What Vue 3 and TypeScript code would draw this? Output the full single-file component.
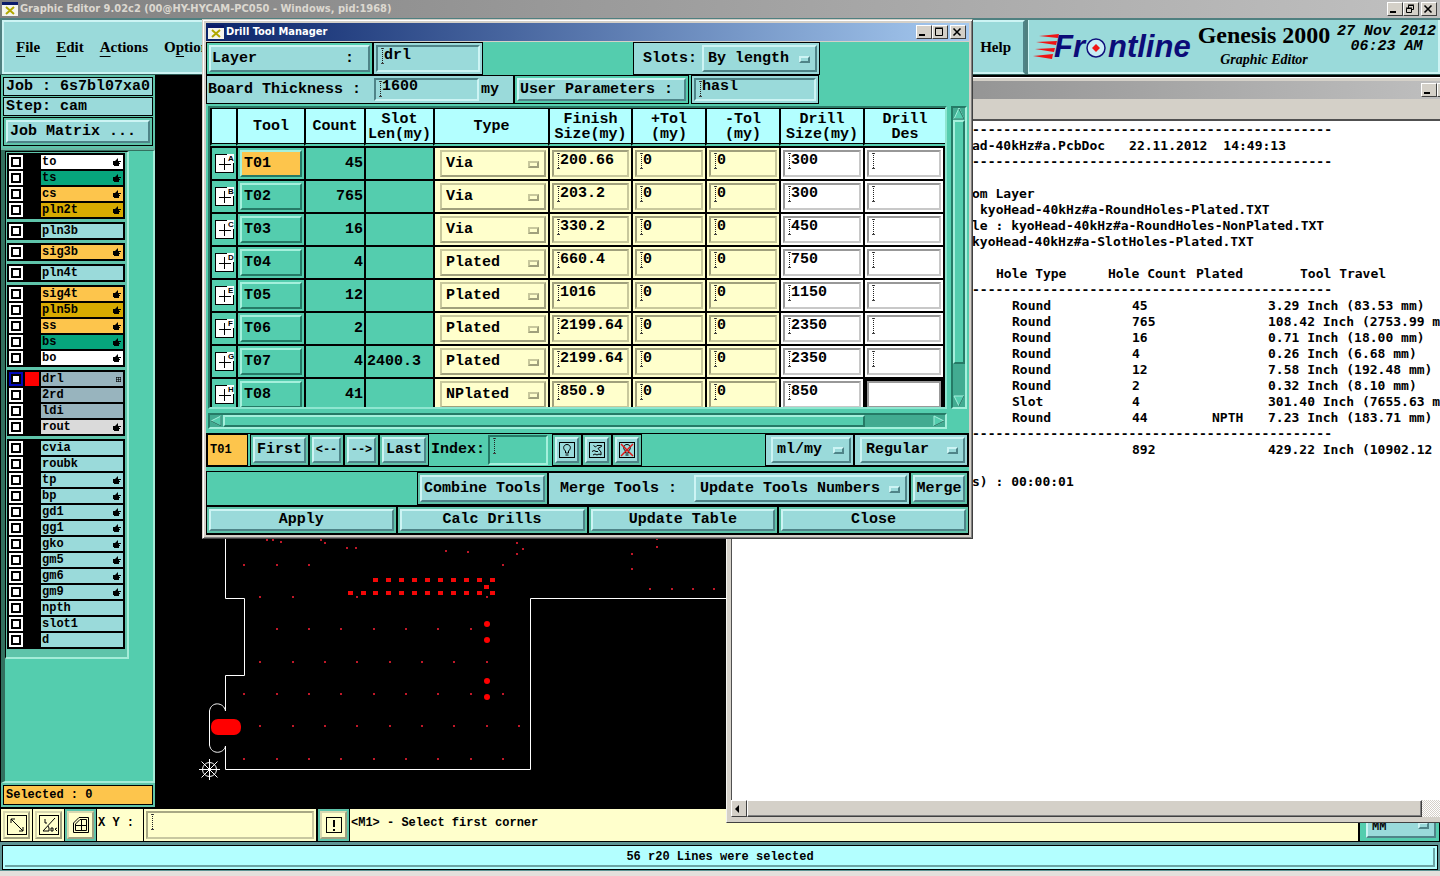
<script setup lang="ts">
import { ref } from 'vue'

interface Layer { name: string; tone: string; hand?: boolean; grid?: boolean; active?: boolean }
interface Tool { id: string; mark: string; count: number; slot: string; type: string; finish: string; drill: string }
interface Hole { type: string; count: string; plated: string; travel: string }

const layerGroups: Layer[][] = [
  [
    { name: 'to', tone: 'white', hand: true },
    { name: 'ts', tone: 'green', hand: true },
    { name: 'cs', tone: 'orange', hand: true },
    { name: 'pln2t', tone: 'gold', hand: true },
  ],
  [{ name: 'pln3b', tone: 'pale' }],
  [{ name: 'sig3b', tone: 'orange', hand: true }],
  [{ name: 'pln4t', tone: 'pale' }],
  [
    { name: 'sig4t', tone: 'orange', hand: true },
    { name: 'pln5b', tone: 'gold', hand: true },
    { name: 'ss', tone: 'orange', hand: true },
    { name: 'bs', tone: 'green', hand: true },
    { name: 'bo', tone: 'white', hand: true },
  ],
  [
    { name: 'drl', tone: 'slate', grid: true, active: true },
    { name: '2rd', tone: 'slate' },
    { name: 'ldi', tone: 'slate' },
    { name: 'rout', tone: 'gray', hand: true },
  ],
  [
    { name: 'cvia', tone: 'pale' },
    { name: 'roubk', tone: 'pale' },
    { name: 'tp', tone: 'pale', hand: true },
    { name: 'bp', tone: 'pale', hand: true },
    { name: 'gd1', tone: 'pale', hand: true },
    { name: 'gg1', tone: 'pale', hand: true },
    { name: 'gko', tone: 'pale', hand: true },
    { name: 'gm5', tone: 'pale', hand: true },
    { name: 'gm6', tone: 'pale', hand: true },
    { name: 'gm9', tone: 'pale', hand: true },
    { name: 'npth', tone: 'pale' },
    { name: 'slot1', tone: 'pale' },
    { name: 'd', tone: 'pale' },
  ],
]

const tools = ref<Tool[]>([
  { id: 'T01', mark: 'A', count: 45, slot: '', type: 'Via', finish: '200.66', drill: '300' },
  { id: 'T02', mark: 'B', count: 765, slot: '', type: 'Via', finish: '203.2', drill: '300' },
  { id: 'T03', mark: 'C', count: 16, slot: '', type: 'Via', finish: '330.2', drill: '450' },
  { id: 'T04', mark: 'D', count: 4, slot: '', type: 'Plated', finish: '660.4', drill: '750' },
  { id: 'T05', mark: 'E', count: 12, slot: '', type: 'Plated', finish: '1016', drill: '1150' },
  { id: 'T06', mark: 'F', count: 2, slot: '', type: 'Plated', finish: '2199.64', drill: '2350' },
  { id: 'T07', mark: 'G', count: 4, slot: '2400.3', type: 'Plated', finish: '2199.64', drill: '2350' },
  { id: 'T08', mark: 'H', count: 41, slot: '', type: 'NPlated', finish: '850.9', drill: '850' },
])
const selected = ref('T01')
const headings: string[][] = [
  [''], ['Tool'], ['Count'], ['Slot', 'Len(my)'], ['Type'], ['Finish', 'Size(my)'],
  ['+Tol', '(my)'], ['-Tol', '(my)'], ['Drill', 'Size(my)'], ['Drill', 'Des'],
]

const holes: Hole[] = [
  { type: 'Round', count: '45', plated: '', travel: '3.29 Inch (83.53 mm)' },
  { type: 'Round', count: '765', plated: '', travel: '108.42 Inch (2753.99 mm)' },
  { type: 'Round', count: '16', plated: '', travel: '0.71 Inch (18.00 mm)' },
  { type: 'Round', count: '4', plated: '', travel: '0.26 Inch (6.68 mm)' },
  { type: 'Round', count: '12', plated: '', travel: '7.58 Inch (192.48 mm)' },
  { type: 'Round', count: '2', plated: '', travel: '0.32 Inch (8.10 mm)' },
  { type: 'Slot', count: '4', plated: '', travel: '301.40 Inch (7655.63 mm)' },
  { type: 'Round', count: '44', plated: 'NPTH', travel: '7.23 Inch (183.71 mm)' },
]
const dashes = '-'.repeat(46)

const odd = [243, 276, 308, 340, 373, 405, 437, 470, 502]
const even = [259, 292, 324, 356, 389, 421, 453, 486]
const at = (xs: number[], y: number): number[][] => xs.map((x) => [x, y])
const vias: number[][] = [
  [266, 540], [272, 540], [280, 542], [320, 540], [324, 543], [346, 548], [355, 548],
  [445, 551], [467, 552], [516, 543], [522, 549], [516, 554], [656, 539], [656, 547],
  [631, 554], [631, 569], ...at([649, 671, 692, 713], 589),
  ...at([243, 276, 308, 502], 565), ...at([259, 292, 356, 486], 597),
  ...at(odd.slice(1, 8), 629), ...at(even, 662), ...at(odd, 694),
  ...at([...even, 518], 726), ...at(odd, 759),
]
const pinRow = [375, 388, 401, 414, 427, 440, 453, 466, 479, 492]
const pins: number[][] = [...at(pinRow, 580), ...at([350, 363, ...pinRow], 593), [486, 587]]
const pads: number[][] = [[487, 624], [487, 640], [487, 681], [487, 697]]
</script>

<template>
  <div class="screen">
    <div class="titlebar idle">
      <svg class="appicon" viewBox="0 0 16 16"><rect y="1" width="16" height="14" fill="#f4f4ec" /><rect y="1" width="16" height="3" fill="#0a1a6a" /><path d="M4 6l8 7M12 6l-8 7" stroke="#b0a800" stroke-width="2" /></svg>
      <span class="title">Graphic Editor 9.02c2 (00@HY-HYCAM-PC050 - Windows, pid:1968)</span>
      <button class="wb" aria-label="Minimize"><svg viewBox="0 0 12 10"><path d="M2 8h6" stroke="#000" stroke-width="2" /></svg></button>
      <button class="wb" aria-label="Restore"><svg viewBox="0 0 12 10"><path d="M4.500 4V1.500h5v4H8M4 1h6M2.500 4.500h5v4h-5zM2 4h6" fill="none" stroke="#000" /></svg></button>
      <button class="wb last" aria-label="Close"><svg viewBox="0 0 12 10"><path d="M2.500 1.500l7 7M9.500 1.500l-7 7" stroke="#000" stroke-width="1.600" /></svg></button>
    </div>

    <header class="top">
      <nav class="menu">
        <a href="#"><u>F</u>ile</a><a href="#"><u>E</u>dit</a><a href="#"><u>A</u>ctions</a><a href="#">O<u>p</u>tions</a>
        <a class="help" href="#">Help</a>
      </nav>
      <div class="brand">
        <svg class="logo" width="164" height="40" viewBox="0 0 164 40">
          <g fill="#f01414"><path d="M6 7l20-2-1 4zM3 13l21-1-1 4zM2 20l20-1-1 4zM0 27l20-2-1 5z" /></g>
          <text x="21" y="28">Fr</text>
          <circle cx="63" cy="19" r="9" fill="#c8ecf4" stroke="#10107c" stroke-width="1.500" />
          <path d="M63 15l4 4-4 4-4-4z" fill="#f01414" />
          <text x="75" y="28">ntline</text>
        </svg>
        <div class="product"><strong>Genesis 2000</strong><em>Graphic Editor</em></div>
        <div class="clock"><span>27 Nov 2012</span><span>06:23 AM</span></div>
      </div>
    </header>

    <main class="work">
      <aside class="side">
        <div class="job">
          <div class="jobline">Job : 6s7bl07xa0</div>
          <div class="jobline">Step: cam</div>
          <div class="jobcell"><button class="up wide">Job Matrix ...</button></div>
        </div>
        <div class="layers">
          <div class="list">
            <div v-for="(group, g) in layerGroups" :key="g" class="group">
              <label v-for="l in group" :key="l.name" class="layer" :class="{ active: l.active }">
                <input type="checkbox"><i class="swatch"></i>
                <span class="name" :class="l.tone">{{ l.name }}
                  <svg v-if="l.hand" class="hand" viewBox="0 0 8 8"><path d="M0 3h2l3-3v3h3v1H6v1h1v1H6v2H1V7H0z" /></svg>
                  <svg v-if="l.grid" class="dots" viewBox="0 0 5 5"><path d="M0 .5h5M0 2.500h5M0 4.500h5M.5 0v5M2.500 0v5M4.500 0v5" stroke="#000" stroke-width=".6" /></svg>
                </span>
              </label>
            </div>
          </div>
        </div>
        <div class="picked"><div>Selected : 0</div></div>
      </aside>

      <svg class="canvas">
        <g transform="translate(-155 -75)">
          <path d="M225.500 500V598.500H244.500V675.500H225.500V711C224 702 211 701 209.500 711V745C211 755 224 754 225.500 746V769.500H530.500V598.500H740" fill="none" stroke="#fff" />
          <rect v-for="(v, i) in vias" :key="'v' + i" :x="v[0]" :y="v[1] - 1" width="2" height="2" fill="#c01828" />
          <rect v-for="(p, i) in pins" :key="'p' + i" :x="p[0] - 2" :y="p[1] - 2" width="5" height="4" fill="#f40808" />
          <circle v-for="(p, i) in pads" :key="'c' + i" :cx="p[0]" :cy="p[1]" r="3" fill="red" />
          <rect x="211" y="719" width="30" height="16" rx="7" fill="red" />
          <g fill="none" stroke="#fff"><circle cx="209.500" cy="769.500" r="7" /><circle cx="209.500" cy="769.500" r="1" /><path d="M199 769.500h21M209.500 759v21M201.500 761.500l16 16M217.500 761.500l-16 16" /></g>
        </g>
      </svg>
    </main>

    <footer class="tools">
      <div class="tcell"><button class="cream up" aria-label="Zoom"><svg viewBox="0 0 20 20"><rect x=".5" y=".5" width="19" height="19" /><path d="M4 4l12 12M4 8V4h4M16 12v4h-4" /></svg></button></div>
      <div class="tcell"><button class="cream up" aria-label="Measure"><svg viewBox="0 0 20 20"><rect x=".5" y=".5" width="19" height="19" /><path d="M4 16L16 3M4 16h6M6 4v4h2M9 11l1 2v3M12 13h2v3h-2zM18 13l-2 1 2 2" /></svg></button></div>
      <div class="tcell teal"><button class="cream up" aria-label="Grid"><svg viewBox="0 0 20 20"><path d="M4.500 15.500V9L9 4.500h6.500v11zM4.500 10.500h11M10.500 4.500v11" /><path d="M2.500 17.500V8L8 2.500h9.500v15z" /></svg></button></div>
      <label class="xy" for="xy">X Y :</label>
      <div class="xyfield"><input id="xy" class="in cream caret" type="text"></div>
      <div class="tcell teal"><button class="cream up" aria-label="Alert"><svg viewBox="0 0 20 20"><rect x="2.500" y="2.500" width="15" height="15" /><path d="M10 5v7M10 14v2" stroke-width="2" /></svg></button></div>
      <div class="message">&lt;M1&gt; - Select first corner</div>
      <div class="units"><label class="pick up teal"><select aria-label="Units"><option>MM</option></select><i class="knob"></i></label></div>
    </footer>
    <div class="status"><p>56 r20 Lines were selected</p></div>

    <section class="report">
      <div class="titlebar idle">
        <span class="title"></span>
        <button class="wb" aria-label="Minimize"><svg viewBox="0 0 12 10"><path d="M2 8h6" stroke="#000" stroke-width="2" /></svg></button>
        <button class="wb" aria-label="Maximize"><svg viewBox="0 0 12 10"><path d="M2.500 1.500h7v7h-7zM2 1h8" fill="none" stroke="#000" /></svg></button>
      </div>
      <div class="menustrip"></div>
      <div class="paper">
        <p>{{ dashes }}</p>
        <p class="file"><span>ad-40kHz#a.PcbDoc</span><span>22.11.2012</span><span>14:49:13</span></p>
        <p>{{ dashes }}</p>
        <p></p>
        <p>om Layer</p>
        <p class="indent">kyoHead-40kHz#a-RoundHoles-Plated.TXT</p>
        <p>le : kyoHead-40kHz#a-RoundHoles-NonPlated.TXT</p>
        <p>kyoHead-40kHz#a-SlotHoles-Plated.TXT</p>
        <p></p>
        <table class="holes">
          <colgroup><col class="h1"><col class="h2"><col class="h3"><col></colgroup>
          <thead>
            <tr><th>Hole Type</th><th>Hole Count</th><th>Plated</th><th>Tool Travel</th></tr>
          </thead>
          <tbody>
            <tr><td class="rule" colspan="4">{{ dashes }}</td></tr>
            <tr v-for="(h, i) in holes" :key="i"><td>{{ h.type }}</td><td>{{ h.count }}</td><td>{{ h.plated }}</td><td>{{ h.travel }}</td></tr>
            <tr><td class="rule" colspan="4">{{ dashes }}</td></tr>
            <tr><td></td><td>892</td><td></td><td>429.22 Inch (10902.12</td></tr>
          </tbody>
        </table>
        <p></p>
        <p>s) : 00:00:01</p>
      </div>
      <div class="winscroll">
        <button class="wb" aria-label="Scroll left"><svg viewBox="0 0 12 10"><path d="M7 1v8L3 5z" /></svg></button>
        <div class="winthumb"></div><div class="dither"></div>
      </div>
    </section>

    <section class="dialog">
      <div class="titlebar live">
        <svg class="appicon" viewBox="0 0 16 16"><rect y="1" width="16" height="14" fill="#f4f4ec" /><rect y="1" width="16" height="3" fill="#0a1a6a" /><path d="M4 6l8 7M12 6l-8 7" stroke="#b0a800" stroke-width="2" /></svg>
        <span class="title">Drill Tool Manager</span>
        <button class="wb" aria-label="Minimize"><svg viewBox="0 0 12 10"><path d="M2 8h6" stroke="#000" stroke-width="2" /></svg></button>
        <button class="wb" aria-label="Maximize"><svg viewBox="0 0 12 10"><path d="M2.500 1.500h7v7h-7zM2 1h8" fill="none" stroke="#000" /></svg></button>
        <button class="wb last" aria-label="Close"><svg viewBox="0 0 12 10"><path d="M2.500 1.500l7 7M9.500 1.500l-7 7" stroke="#000" stroke-width="1.600" /></svg></button>
      </div>
      <div class="body">
        <div class="form first">
          <div class="cell layercell"><button class="up split"><span>Layer</span><span>:</span></button></div>
          <div class="cell pale layerin"><input class="in caret" type="text" value="drl" aria-label="Layer"></div>
          <div class="cell pale slots"><label for="slots">Slots:</label><div class="pick up"><select id="slots"><option>By length</option></select><i class="knob"></i></div></div>
        </div>
        <div class="form second">
          <div class="cell pale board"><label for="thick">Board Thickness :</label><input id="thick" class="in caret" type="text" value="1600"><span>my</span></div>
          <div class="cell usercell"><button class="up split"><span>User Parameters :</span></button></div>
          <div class="cell pale userin"><input class="in caret" type="text" value="hasl" aria-label="User Parameters"></div>
        </div>

        <div class="scroller">
          <div class="view">
            <table class="drills">
              <colgroup><col class="c1"><col class="c2"><col class="c3"><col class="c4"><col class="c5"><col class="c6"><col class="c7"><col class="c7"><col class="c8"><col></colgroup>
              <thead>
                <tr><th v-for="(h, i) in headings" :key="i"><span v-for="t in h" :key="t">{{ t }}</span></th></tr>
              </thead>
              <tbody>
                <tr v-for="(t, i) in tools" :key="t.id">
                  <td class="sym"><svg width="19" height="19" viewBox="0 0 19 19"><rect width="19" height="19" fill="#fff" /><path d="M.5 0v19M0 .5h12M0 18.500h19M18.500 9v10M4 10.500h12M9.500 4v12" stroke="#000" fill="none" /><text x="13" y="7">{{ t.mark }}</text></svg></td>
                  <td class="tool"><button class="up" :class="{ on: selected === t.id }" @click="selected = t.id">{{ t.id }}</button></td>
                  <td class="num">{{ t.count }}</td>
                  <td class="slot">{{ t.slot }}</td>
                  <td class="cream type"><div class="pick up"><select v-model="t.type" :aria-label="t.id + ' type'"><option>Via</option><option>Plated</option><option>NPlated</option></select><i class="knob"></i></div></td>
                  <td class="cream"><input v-model="t.finish" class="in caret" type="text" :aria-label="t.id + ' finish size'"></td>
                  <td class="cream"><input class="in caret" type="text" value="0" :aria-label="t.id + ' plus tolerance'"></td>
                  <td class="cream"><input class="in caret" type="text" value="0" :aria-label="t.id + ' minus tolerance'"></td>
                  <td class="white"><input v-model="t.drill" class="in caret" type="text" :aria-label="t.id + ' drill size'"></td>
                  <td class="white"><input class="in" :class="i === 7 ? 'focus' : 'caret'" type="text" :aria-label="t.id + ' designation'"></td>
                </tr>
              </tbody>
            </table>
          </div>
          <div class="bar vert">
            <svg width="12" height="12" viewBox="0 0 12 12"><path d="M6 0L11 11H1z" fill="#54cdae" stroke="#a4f0dc" /><path d="M1 11h10L6 1" fill="none" stroke="#1f6e5c" /></svg>
            <div class="thumb"></div>
            <svg width="12" height="12" viewBox="0 0 12 12"><path d="M1 1h10L6 11z" fill="#54cdae" stroke="#a4f0dc" /><path d="M11 1L6 11" stroke="#1f6e5c" /></svg>
          </div>
          <div class="bar horz">
            <svg width="12" height="12" viewBox="0 0 12 12"><path d="M11 1v10L1 6z" fill="#54cdae" stroke="#a4f0dc" /><path d="M1 6l10 5V1" fill="none" stroke="#1f6e5c" /></svg>
            <div class="thumb"></div>
            <svg width="12" height="12" viewBox="0 0 12 12"><path d="M1 1v10l10-5z" fill="#54cdae" stroke="#a4f0dc" /><path d="M1 11l10-5" stroke="#1f6e5c" /></svg>
          </div>
        </div>

        <div class="strip nav">
          <div class="current">T01</div>
          <div class="bc n1"><button class="up">First</button></div>
          <div class="bc n2"><button class="up">&lt;--</button></div>
          <div class="bc n2"><button class="up">--&gt;</button></div>
          <div class="bc n3"><button class="up">Last</button></div>
          <label class="index" for="index">Index:</label>
          <input id="index" class="in caret indexin" type="text">
          <div class="bc n4"><button class="up" aria-label="Highlight"><svg width="16" height="16" viewBox="0 0 16 16"><rect x=".5" y=".5" width="15" height="15" /><path d="M6.500 11V9C3 6 5 2.500 8 2.500S13 6 9.500 9v2zM6.500 13h3" /></svg></button></div>
          <div class="bc n4"><button class="up" aria-label="Undo"><svg width="16" height="16" viewBox="0 0 16 16"><rect x=".5" y=".5" width="15" height="15" /><path d="M4.500 3.500l2 1.500 1.500-1.500h4.500v1L9 6.500l3 3.500v3l-2-1-2 1-2-1-2 1M3 9.500l2-1 2 1h2" /></svg></button></div>
          <div class="bc n4"><button class="up" aria-label="Clear"><svg width="16" height="16" viewBox="0 0 16 16"><rect x=".5" y=".5" width="15" height="15" /><path d="M6.500 11V9C3 6 5 2.500 8 2.500S13 6 9.500 9v2zM6.500 13h3" /><path d="M2 2l12 12M14 2L2 14" stroke="#e01818" stroke-width="1.500" /></svg></button></div>
          <div class="fill"></div>
          <div class="bc pale u1"><div class="pick up"><select aria-label="Measure units"><option>ml/my</option></select><i class="knob"></i></div></div>
          <div class="bc pale u2"><div class="pick up"><select aria-label="Mode"><option>Regular</option></select><i class="knob"></i></div></div>
        </div>
        <div class="strip merge">
          <div class="fill"></div>
          <div class="bc m1"><button class="up">Combine Tools</button></div>
          <div class="bc pale m2"><label for="merge">Merge Tools :</label><div class="pick up"><select id="merge"><option>Update Tools Numbers</option></select><i class="knob"></i></div></div>
          <div class="bc m3"><button class="up">Merge</button></div>
        </div>
        <div class="actions">
          <div v-for="a in ['Apply', 'Calc Drills', 'Update Table', 'Close']" :key="a" class="bc"><button class="up">{{ a }}</button></div>
        </div>
      </div>
    </section>
  </div>
</template>

<style>
body { margin: 0; background: #d4d0c8; }
</style>

<style scoped>
.screen {
  --teal: #54cdae; --pale: #9adada; --cream: #ffffcc; --hi: #cdf4f4; --lo: #4f8488;
  position: relative; display: flex; flex-direction: column; min-height: 100vh; overflow: hidden;
  background: #000; color: #000; font: bold 15px/18px "Liberation Mono", monospace;
}
.screen * { box-sizing: border-box; }
button, input, select { margin: 0; padding: 0; border: 0; border-radius: 0; background: none; color: #000; font: inherit; outline: 0; appearance: none; min-width: 0; }
p { margin: 0; }
svg { display: block; flex: none; }
.pale { background: var(--pale); }
.teal { background: var(--teal); }
.up { border: 2px solid; border-color: var(--hi) var(--lo) var(--lo) var(--hi); background: var(--pale); }
.in { border: 2px solid; border-color: var(--lo) var(--hi) var(--hi) var(--lo); padding: 0 0 6px 6px; background-color: transparent; }
.caret {
  background-image: repeating-linear-gradient(#222 0 1px, transparent 1px 2px), linear-gradient(#444, #444), linear-gradient(#444, #444);
  background-size: 1px 15px, 3px 1px, 3px 1px; background-position: 4px 1px, 3px 1px, 3px 16px; background-repeat: no-repeat;
}

/* window frames */
.titlebar { display: flex; align-items: center; height: 18px; padding-right: 3px; font: bold 11px/18px "DejaVu Sans Condensed", "DejaVu Sans", sans-serif; flex: none; }
.idle { background: linear-gradient(90deg, #808080, #c0c0c0); color: #dcd8d0; }
.live { background: linear-gradient(90deg, #0a246a, #a6caf0); color: #fff; }
.title { flex: 1; padding-left: 2px; white-space: nowrap; }
.appicon { width: 16px; height: 16px; margin-left: 2px; }
.wb { width: 16px; height: 14px; flex: none; background: #d4d0c8; border: 1px solid; border-color: #fff #404040 #404040 #fff; }
.wb svg { width: 12px; height: 10px; }
.wb.last { margin-left: 2px; }

/* header */
.top { display: flex; height: 57px; background: #4f8080; padding-top: 2px; border-bottom: 1px solid #2d5a55; flex: none; }
.menu { flex: 1; display: flex; align-items: center; gap: 16px; padding-left: 12px; margin: 0 3px 0 2px; border: 2px solid; border-color: var(--hi) var(--lo) var(--hi) var(--hi); background: var(--pale); font: bold 15px/20px "Liberation Serif", serif; }
.menu a { color: #000; text-decoration: none; }
.menu u { text-underline-offset: 4px; }
.help { margin-left: auto; padding-right: 12px; }
.brand { display: flex; width: 412px; padding-left: 4px; background: var(--pale); border: solid; border-width: 0 2px 2px 1px; border-color: var(--hi); white-space: nowrap; }
.logo { margin-top: 9px; }
.logo text { font: italic bold 31px "Liberation Sans", sans-serif; fill: #0c0c78; }
.product { display: flex; flex-direction: column; align-items: center; width: 134px; }
.product strong { font: bold 24px/30px "Liberation Serif", serif; }
.product em { font: italic bold 14px/20px "Liberation Serif", serif; }
.clock { display: flex; flex-direction: column; align-items: center; font-style: italic; line-height: 15px; padding: 4px 0 0 6px; }

/* side column */
.work { flex: 1; display: flex; min-height: 730px; background: #000; overflow: hidden; }
.side { width: 155px; display: flex; flex-direction: column; padding-left: 1px; flex: none; }
.job { padding: 2px; background: #5fc4aa; display: grid; gap: 1px; border-bottom: 2px solid #6cb5a2; }
.jobline { border: 1px solid #000; background: var(--pale); padding-left: 2px; height: 19px; line-height: 18px; white-space: nowrap; }
.jobcell { border: 1px solid #000; padding: 2px; height: 29px; display: flex; }
.wide { flex: 1; text-align: left; padding-left: 2px; }
.layers { flex: 1; background: var(--teal); border: solid; border-width: 1px 2px 2px 4px; border-color: #33705f #a4ecd8 #a4ecd8 #33705f; }
.list { width: 124px; padding: 1px 1px 8px; border: solid; border-width: 1px 2px 2px 1px; border-color: #000 #a4ecd8 #a4ecd8 #000; display: grid; gap: 3px; background: #5fc4aa; }
.group { background: #000; padding: 1px; width: 118px; }
.layer { display: flex; align-items: center; gap: 2px; height: 16px; padding: 1px 0 1px 1px; font-size: 12px; line-height: 13px; }
.layer input { width: 14px; height: 14px; background: #fff; border: 2px solid #fff; outline: 2px solid #000; outline-offset: -4px; }
.layer.active input { border-color: #0008b8; }
.swatch { width: 14px; height: 14px; }
.active .swatch { background: red; }
.name { flex: 1; height: 14px; padding-left: 1px; margin-right: 1px; display: flex; align-items: center; justify-content: space-between; background: var(--pale); }
.name.white { background: #fff; }
.name.green { background: #06a57c; }
.name.orange { background: #fdc54c; }
.name.gold { background: #d8ab00; }
.name.slate { background: #98b4be; }
.name.gray { background: #dadada; }
.hand { width: 8px; height: 8px; margin-right: 2px; }
.dots { width: 5px; height: 5px; margin-right: 2px; }
.picked { background: #5fc4aa; padding: 2px; font-size: 12px; }
.picked div { border: 1px solid #000; background: #fdc54c; padding-left: 2px; }
.canvas { flex: 1; width: auto; height: auto; min-width: 0; overflow: visible; }

/* bottom bars */
.tools { display: flex; height: 35px; padding: 2px 1px 1px; background: #000; font-size: 12px; line-height: 28px; flex: none; }
.tcell { width: 31px; margin-right: 1px; padding: 2px; background: var(--cream); display: flex; }
.tcell.teal { background: #5fc4aa; }
.cream { background-color: var(--cream); --hi: #ffffe8; --lo: #a8a884; }
.tcell button { flex: 1; border-color: #d8d8b0 #a0a080 #a0a080 #d8d8b0; display: grid; place-items: center; background: var(--cream); }
.tcell svg { width: 20px; height: 20px; fill: none; stroke: #000; }
.xy { width: 46px; padding-left: 1px; background: var(--cream); white-space: nowrap; }
.xyfield { width: 172px; margin: 0 2px 0 1px; padding: 2px; background: var(--cream); display: flex; }
.xyfield input { flex: 1; border-color: #a8a884 #c8c8a0 #c8c8a0 #a8a884; }
.message { flex: 1; padding-left: 1px; background: var(--cream); }
.units { width: 79px; margin-left: 2px; padding: 2px 3px 3px 6px; background: var(--teal); display: flex; }
.status { height: 34px; padding: 3px 2px 1px; background: #5e9494; border-bottom: 5px solid #e4e0dc; flex: none; }
.status p { height: 25px; background: #b3ffff; border: 1px solid #000; box-shadow: inset 0 0 0 2px #b3ffff, inset 0 -4px 0 #6ca4a4, inset -4px 0 0 #6ca4a4; text-align: center; font-size: 12px; line-height: 22px; }

/* text report window */
.report { position: absolute; left: 726px; top: 77px; right: -24px; display: flex; flex-direction: column; padding: 3px 4px 5px; background: #d4d0c8; border: 1px solid; border-color: #fff #404040 #404040 #f4f4f0; }
.report .titlebar { padding-right: 6px; }
.menustrip { height: 20px; }
.paper { height: 681px; background: #fff; border: solid #505050; border-width: 2px 0 0 1px; padding: 1px 0 0 240px; overflow: hidden; font: bold 13px/16px "DejaVu Sans Mono", monospace; white-space: pre; }
.paper p { height: 16px; }
.file { display: flex; gap: 24px; }
.file span + span + span { margin-left: -8px; }
.indent { padding-left: 8px; }
.holes { width: 100%; border-collapse: collapse; table-layout: fixed; }
.holes th, .holes td { padding: 0; height: 16px; text-align: left; }
.h1 { width: 128px; } .h2 { width: 88px; } .h3 { width: 72px; }
.holes th:nth-child(1) { padding-left: 24px; }
.holes th:nth-child(2), .holes th:nth-child(3) { padding-left: 8px; }
.holes th:nth-child(4) { padding-left: 40px; }
.holes td:nth-child(1) { padding-left: 40px; }
.holes td:nth-child(2) { padding-left: 32px; }
.holes td:nth-child(3) { padding-left: 24px; }
.holes td:nth-child(4) { padding-left: 8px; }
.holes td.rule { padding-left: 0; }
.winscroll { display: flex; height: 17px; }
.winscroll .wb { height: 17px; }
.winthumb { flex: 1; background: #d4d0c8; border: 1px solid; border-color: #fff #404040 #404040 #fff; box-shadow: inset -1px -1px #808080; }
.dither { width: 37px; background: repeating-conic-gradient(#fff 0 25%, #d4d0c8 0 50%) 0 0 / 2px 2px; }

/* drill tool manager */
.dialog { position: absolute; left: 202px; top: 19px; width: 771px; padding: 3px; background: #d4d0c8; border: 1px solid; border-color: #d4d0c8 #404040 #404040 #d4d0c8; box-shadow: inset 1px 1px #fff, inset -1px -1px #808080; }
.body { background: var(--teal); margin-top: 1px; }
.form, .strip, .actions, .cell, .bc { display: flex; }
.form { white-space: nowrap; }
.first { height: 33px; }
.second { height: 29px; }
.cell { border: 1px solid #000; padding: 2px; align-items: stretch; }
.cell label, .cell > span { align-self: center; }
.cell .in { flex: 1; padding-bottom: 6px; }
.split { flex: 1; display: flex; align-items: center; justify-content: space-between; padding: 0 14px 0 1px; }
.layercell { width: 167px; }
.layerin { width: 110px; }
.slots { width: 187px; margin-left: 150px; padding-left: 9px; gap: 5px; }
.board { width: 308px; padding-left: 1px; }
.board .in { flex: none; width: 105px; margin: 0 2px 0 13px; }
.usercell { width: 175px; }
.userin { width: 128px; margin-left: 2px; }
.pick { position: relative; flex: 1; display: flex; align-items: center; }
.pick select { width: 100%; height: 100%; padding-left: 4px; }
.knob { position: absolute; right: 5px; top: 50%; width: 11px; height: 7px; margin-top: -3px; border: 2px solid; border-color: var(--hi) var(--lo) var(--lo) var(--hi); pointer-events: none; }

.scroller { display: grid; grid-template-columns: 1fr 16px; gap: 4px; padding: 2px 2px 4px; }
.view { height: 303px; overflow: hidden; border: 2px solid; border-color: #2b7a68 #8ee6d0 #8ee6d0 #2b7a68; }
.drills { width: 100%; table-layout: fixed; border-collapse: separate; border-spacing: 0; }
.c1 { width: 26px; } .c2 { width: 68px; } .c3 { width: 60px; } .c4 { width: 69px; } .c5 { width: 115px; }
.c6 { width: 83px; } .c7 { width: 74px; } .c8 { width: 84px; }
.drills th { height: 38px; padding: 0; background: #b3ffff; border: solid #000; border-width: 1px 0 2px 2px; border-bottom-color: var(--teal); box-shadow: inset 0 -1px #000; line-height: 15px; }
.drills th span { display: block; }
.drills td { height: 33px; padding: 2px; border: solid #000; border-width: 2px 0 0 2px; line-height: 27px; }
.drills td:last-child { border-right-width: 2px; }
.drills td .in, .drills td .pick, .drills td button { width: 100%; height: 27px; line-height: 22px; }
.drills td .in { display: block; }
.drills .white { background: #fff; --hi: #c8c8c8; --lo: #989898; }
.drills .cream { --hi: #c8c89c; --lo: #a0a07c; }
.cream .pick { background: var(--cream); }
.drills .type { padding-left: 5px; }
.drills .sym { padding: 0 0 0 3px; }
.sym text { font: bold 8px "Liberation Sans", sans-serif; }
.tool button { display: block; text-align: left; padding-left: 2px; background: var(--teal); --hi: #a4f0dc; --lo: #257a66; border-color: #a4f0dc #257a66 #257a66 #a4f0dc; }
.tool button.on { background: #fdc54c; }
.drills .num { text-align: right; padding: 2px 1px; }
.drills .slot { padding: 2px 1px; }
.in.focus { border-color: #999; box-shadow: 0 0 0 2px #000; }
.bar { background: #42ab91; border: 2px solid; border-color: #257a66 #a4f0dc #a4f0dc #257a66; display: flex; }
.thumb { background: var(--teal); border: 2px solid; border-color: #a4f0dc #257a66 #257a66 #a4f0dc; }
.vert { flex-direction: column; justify-content: space-between; }
.vert .thumb { height: 244px; margin-bottom: auto; }
.horz { height: 16px; justify-content: space-between; }
.horz .thumb { width: 642px; margin-right: auto; margin-left: 1px; }

.bc { border: 1px solid #000; padding: 2px; background-color: #5fc4aa; }
.bc.pale { background-color: var(--pale); }
.bc button { flex: 1; display: grid; place-items: center; white-space: nowrap; }
.bc svg { fill: none; stroke: #000; }
.strip { border: 1px solid #000; }
.nav { height: 34px; }
.merge { height: 34px; margin-top: 4px; border-bottom: 0; }
.fill { flex: 1; }
.current { width: 41px; margin-right: 2px; border: 1px solid #000; background: #fdc54c; font-size: 12px; line-height: 30px; padding-left: 2px; }
.n1 { width: 59px; } .n2 { width: 35px; font-size: 12px; } .n3 { width: 50px; } .n4 { width: 30px; }
.index { padding: 7px 3px 0 2px; }
.indexin { width: 60px; margin: 1px 4px 1px 0; padding-bottom: 10px; border-color: #257a66 #a4f0dc #a4f0dc #257a66; }
.u1 { width: 89px; padding-left: 5px; }
.u2 { width: 114px; padding-left: 5px; }
.m1 { width: 131px; }
.m2 { width: 362px; padding-left: 11px; align-items: center; gap: 17px; }
.m2 .pick { height: 100%; }
.m3 { width: 58px; }
.actions .bc { flex: 1; height: 30px; border-width: 2px 1px; }
</style>
